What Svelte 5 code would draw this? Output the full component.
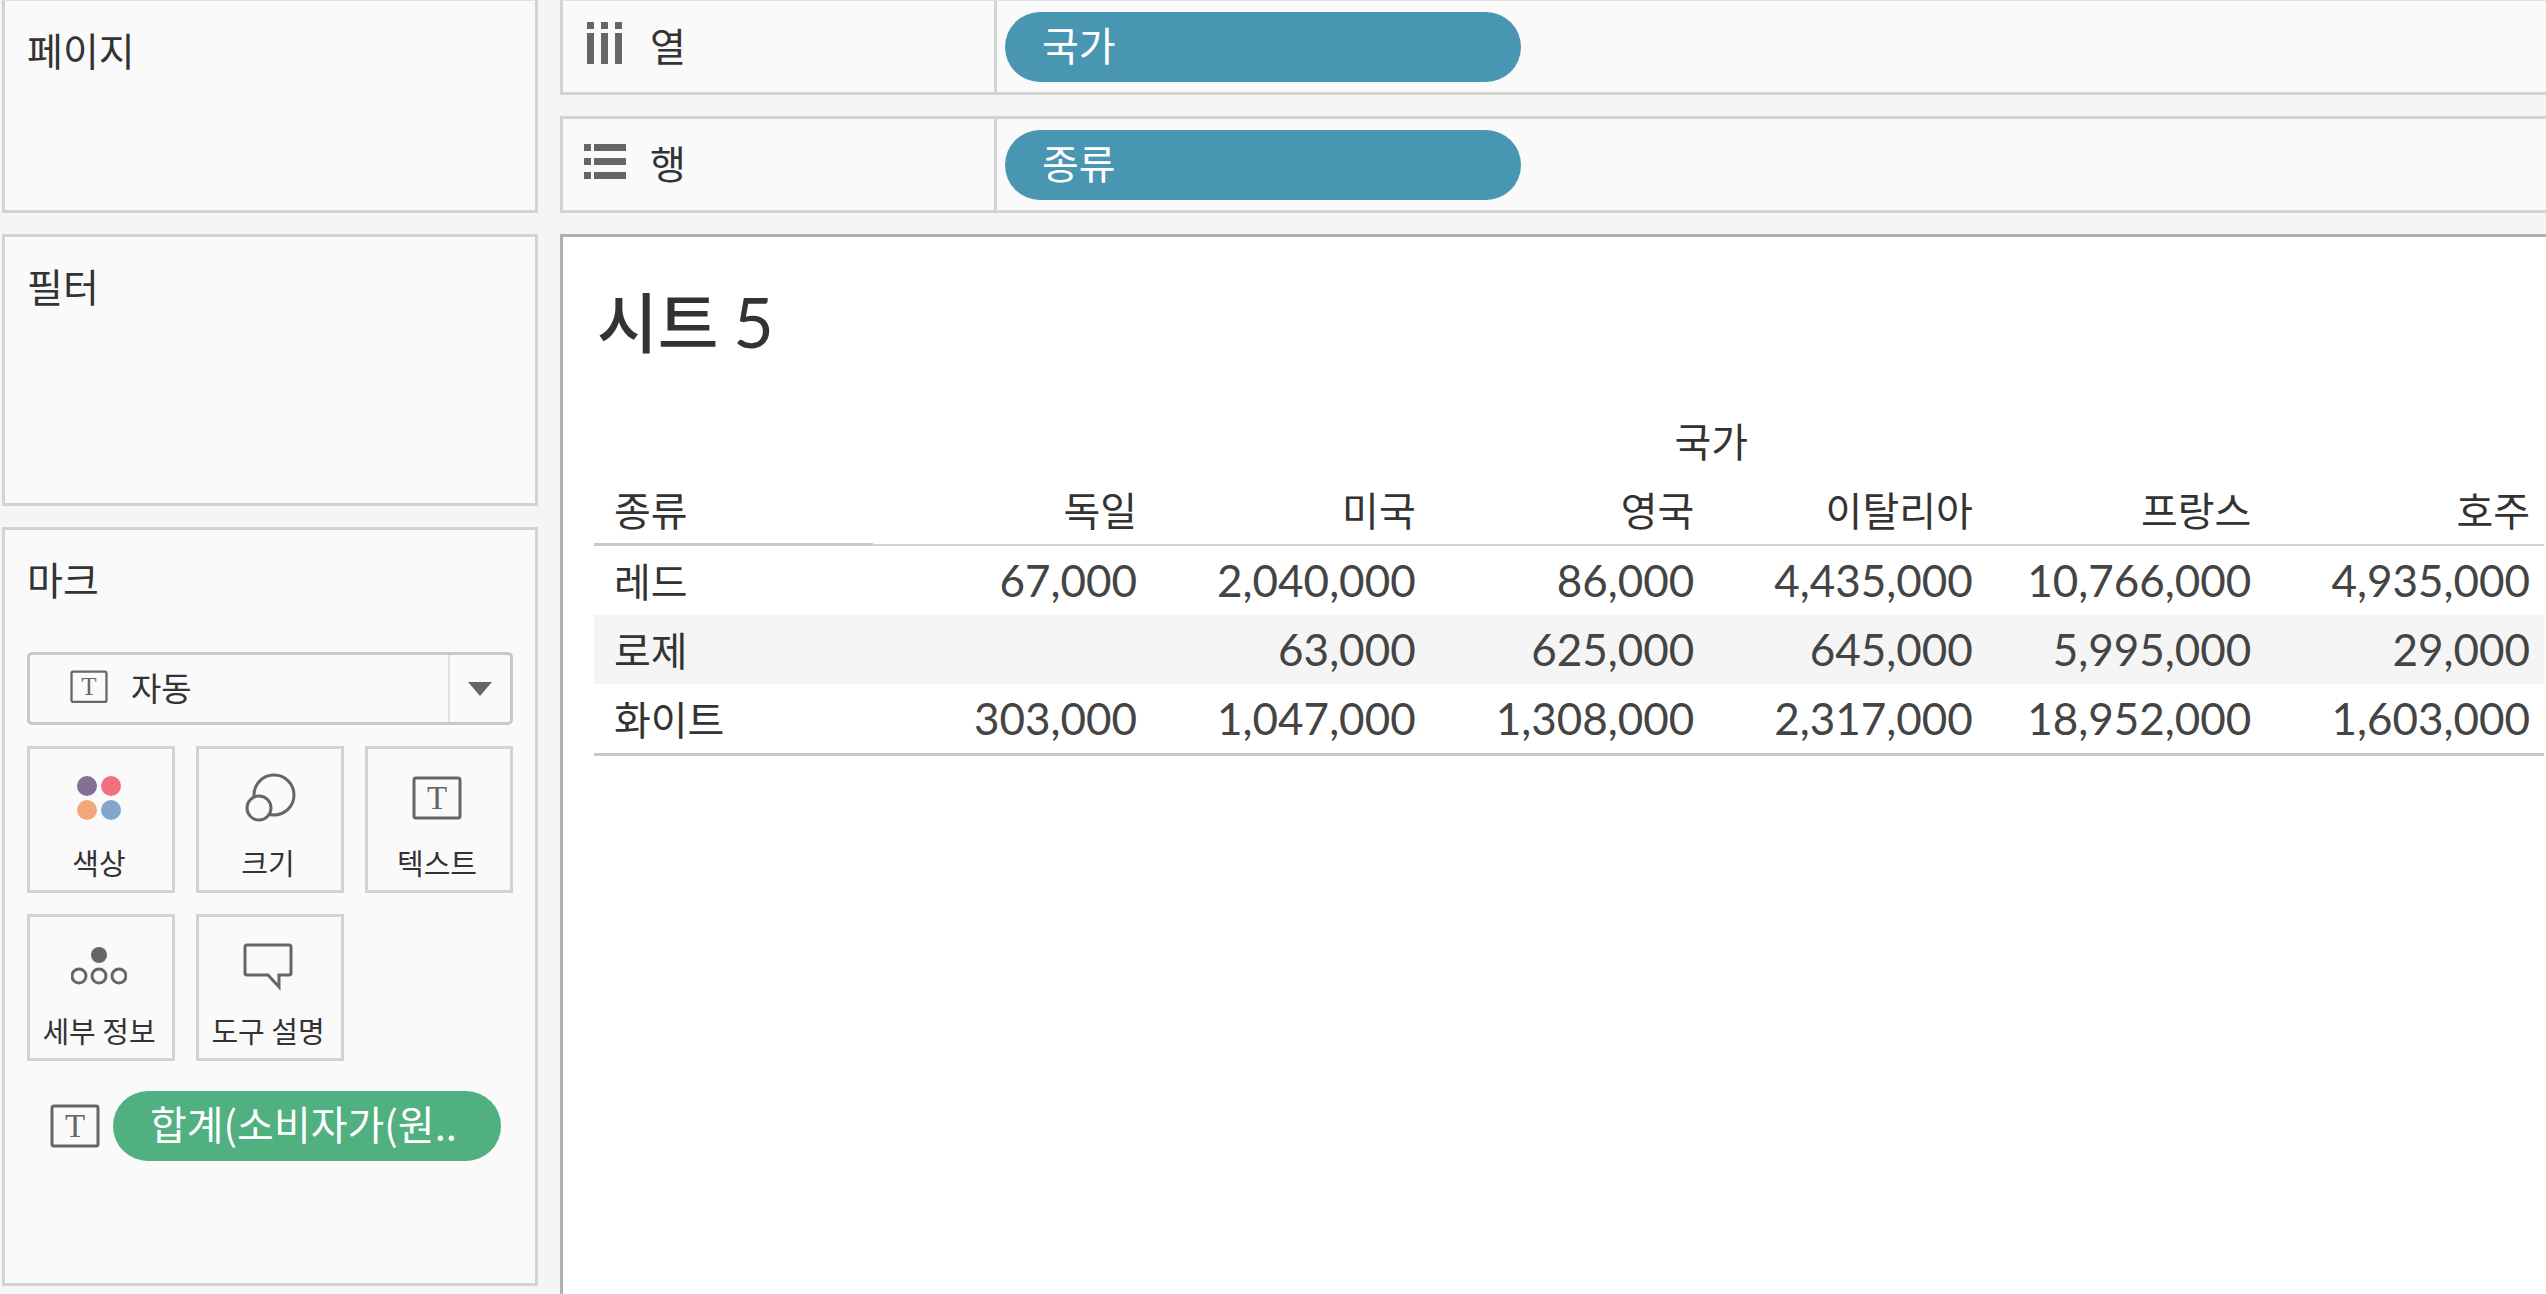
<script lang="ts">
  interface Row {
    kind: string;
    values: (number | null)[];
  }

  const countries = ['독일', '미국', '영국', '이탈리아', '프랑스', '호주'];

  const rows: Row[] = [
    { kind: '레드', values: [67000, 2040000, 86000, 4435000, 10766000, 4935000] },
    { kind: '로제', values: [null, 63000, 625000, 645000, 5995000, 29000] },
    { kind: '화이트', values: [303000, 1047000, 1308000, 2317000, 18952000, 1603000] }
  ];

  const markButtons = [
    { id: 'color', label: '색상' },
    { id: 'size', label: '크기' },
    { id: 'text', label: '텍스트' },
    { id: 'detail', label: '세부 정보' },
    { id: 'tooltip', label: '도구 설명' }
  ];

  const shelves = [
    { id: 'columns', label: '열', field: '국가' },
    { id: 'rows', label: '행', field: '종류' }
  ];

  let markType = $state('auto');

  function format(value: number | null) {
    return value === null ? '' : value.toLocaleString('en-US');
  }
</script>

{#snippet textIcon()}
  <svg class="text-icon" viewBox="0 0 50 44" aria-hidden="true">
    <rect x="2" y="2" width="46" height="40" rx="2" fill="none" stroke="currentColor" stroke-width="3" />
    <text x="25" y="33" text-anchor="middle">T</text>
  </svg>
{/snippet}

<div class="workspace">
  <aside class="sidebar">
    <section class="card pages">
      <h2>페이지</h2>
    </section>

    <section class="card filters">
      <h2>필터</h2>
    </section>

    <section class="card marks">
      <h2 id="marks-title">마크</h2>

      <div class="mark-type">
        <select bind:value={markType} aria-labelledby="marks-title">
          <option value="auto">자동</option>
        </select>
        <span class="mark-type-icon">{@render textIcon()}</span>
        <span class="mark-type-arrow">
          <svg viewBox="0 0 24 14" width="24" height="14" aria-hidden="true">
            <path d="M0 0h24L12 14z" fill="#666" />
          </svg>
        </span>
      </div>

      <div class="mark-buttons">
        {#each markButtons as button (button.id)}
          <button class="mark-button" type="button">
            {#if button.id === 'text'}
              <span class="mark-icon">{@render textIcon()}</span>
            {:else}
              <svg class="mark-icon" viewBox="0 0 56 56" fill="none" stroke="#666" stroke-width="3" aria-hidden="true">
                {#if button.id === 'color'}
                  <g stroke="none">
                    <circle cx="16" cy="16" r="10" fill="#866f97" />
                    <circle cx="40" cy="16" r="10" fill="#ef7180" />
                    <circle cx="16" cy="40" r="10" fill="#f3a77c" />
                    <circle cx="40" cy="40" r="10" fill="#82a5ca" />
                  </g>
                {:else if button.id === 'size'}
                  <circle cx="34" cy="25" r="20" />
                  <circle cx="19" cy="38" r="12" fill="#fafafa" />
                {:else if button.id === 'detail'}
                  <circle cx="28" cy="17" r="8" fill="#666" stroke="none" />
                  <circle cx="8" cy="38" r="7" />
                  <circle cx="28" cy="38" r="7" />
                  <circle cx="48" cy="38" r="7" />
                {:else}
                  <path d="M7 7h42a2 2 0 0 1 2 2v26a2 2 0 0 1-2 2H39v12L28 37H7a2 2 0 0 1-2-2V9a2 2 0 0 1 2-2z" />
                {/if}
              </svg>
            {/if}
            <span>{button.label}</span>
          </button>
        {/each}
      </div>

      <div class="mark-field">
        {@render textIcon()}
        <button class="pill measure" type="button">합계(소비자가(원..</button>
      </div>
    </section>
  </aside>

  <main class="content">
    {#each shelves as shelf (shelf.id)}
      <section class="shelf {shelf.id}">
        <div class="shelf-label">
          <svg viewBox="0 0 42 52" width="42" height="52" fill="#666" aria-hidden="true">
            {#if shelf.id === 'columns'}
              <path d="M3 1h7v7H3zM17 1h7v7h-7zM31 1h7v7h-7zM3 12h7v31H3zM17 12h7v31h-7zM31 12h7v31h-7z" />
            {:else}
              <path d="M0 5h7v7H0zM0 19h7v7H0zM0 33h7v7H0zM10 5h32v7H10zM10 19h32v7H10zM10 33h32v7H10z" />
            {/if}
          </svg>
          <h2>{shelf.label}</h2>
        </div>
        <button class="pill dimension" type="button">{shelf.field}</button>
      </section>
    {/each}

    <section class="view">
      <h1>시트 <span>5</span></h1>

      <table>
        <thead>
          <tr>
            <td></td>
            <th class="group" colspan={countries.length} scope="colgroup">국가</th>
          </tr>
          <tr class="names">
            <th scope="col">종류</th>
            {#each countries as country (country)}
              <th class="country" scope="col">{country}</th>
            {/each}
          </tr>
        </thead>
        <tbody>
          {#each rows as row (row.kind)}
            <tr>
              <th scope="row">{row.kind}</th>
              {#each row.values as value}
                <td>{format(value)}</td>
              {/each}
            </tr>
          {/each}
        </tbody>
      </table>
    </section>
  </main>
</div>

<style>
  :global(body) {
    background: #f5f5f5;
  }

  .workspace {
    display: grid;
    grid-template-columns: 536px minmax(0, 1fr);
    gap: 22px;
    min-height: 100vh;
    padding-left: 2px;
    box-sizing: border-box;
    font-family: 'Noto Sans CJK KR', sans-serif;
    font-size: 40px;
    line-height: 60px;
    color: #333;
  }

  h1,
  h2 {
    margin: 0;
    font-weight: 500;
  }

  h2 {
    font-size: 39px;
    font-weight: 400;
  }

  button,
  select {
    font-family: inherit;
    color: inherit;
  }

  .sidebar,
  .content {
    display: flex;
    flex-direction: column;
    gap: 21px;
  }

  .card {
    box-sizing: border-box;
    padding: 18px 22px;
    border: 3px solid #d3d3d3;
    background: #fafafa;
  }

  .pages {
    min-height: 213px;
    border-top-width: 1px;
    border-top-color: #e3e3e3;
  }

  .filters {
    min-height: 272px;
  }

  .marks {
    min-height: 759px;
  }

  /* Mark type drop-down */
  .mark-type {
    position: relative;
    margin-top: 44px;
  }

  .mark-type select {
    display: block;
    width: 100%;
    height: 73px;
    padding: 0 66px 4px 101px;
    border: 3px solid #c8c8c8;
    border-radius: 5px;
    background: #fafafa;
    font-size: 33px;
    appearance: none;
  }

  .mark-type-icon,
  .mark-type-arrow {
    position: absolute;
    top: 3px;
    bottom: 3px;
    display: flex;
    align-items: center;
    pointer-events: none;
  }

  .mark-type-icon {
    left: 43px;
    padding-bottom: 4px;
  }

  .mark-type-icon .text-icon {
    width: 38px;
  }

  .mark-type-arrow {
    right: 3px;
    width: 60px;
    justify-content: center;
    border-left: 2px solid #e0e0e0;
  }

  .text-icon {
    display: block;
    flex: none;
    width: 50px;
    color: #666;
    font-family: 'Liberation Serif', serif;
    font-size: 33px;
    fill: #666;
  }

  /* Encoding buttons */
  .mark-buttons {
    display: grid;
    grid-template-columns: repeat(3, 1fr);
    gap: 21px;
    margin-top: 21px;
  }

  .mark-button {
    display: flex;
    flex-direction: column;
    align-items: center;
    gap: 16px;
    height: 147px;
    padding: 21px 4px 0 0;
    border: 3px solid #d3d3d3;
    background: #fafafa;
    font-size: 29px;
    line-height: 40px;
    white-space: nowrap;
  }

  .mark-icon {
    display: flex;
    flex: none;
    align-items: center;
    justify-content: center;
    width: 56px;
    height: 56px;
  }

  .mark-field {
    display: flex;
    align-items: center;
    gap: 13px;
    margin-top: 30px;
    padding: 0 12px 0 23px;
  }

  .pill {
    height: 70px;
    padding: 0 37px 6px;
    border: 0;
    border-radius: 35px;
    color: #fff;
    font-size: 40px;
    line-height: 60px;
    text-align: left;
    white-space: nowrap;
  }

  .measure {
    flex: 1;
    background: #50b080;
  }

  .dimension {
    width: 516px;
    background: #4996b2;
  }

  /* Columns and rows shelves */
  .shelf {
    display: flex;
    align-items: center;
    border: 3px solid #d3d3d3;
    border-right: 0;
    background: #fafafa;
  }

  .shelf.columns {
    border-top-width: 1px;
    border-top-color: #e3e3e3;
  }

  .shelf-label {
    display: flex;
    align-items: center;
    gap: 24px;
    box-sizing: border-box;
    width: 434px;
    height: 91px;
    margin-right: 8px;
    padding-left: 21px;
    border-right: 3px solid #d3d3d3;
  }

  .shelf-label h2 {
    padding-bottom: 6px;
  }

  .view {
    flex: 1;
    padding: 32px 2px 0 31px;
    border: 3px solid #b0b0b0;
    border-width: 3px 0 0 3px;
    background: #fff;
  }

  h1 {
    padding-left: 3px;
    font-size: 66px;
    line-height: 100px;
  }

  h1 span {
    font-family: Lato, sans-serif;
    font-size: 70px;
    font-weight: 400;
  }

  table {
    width: 100%;
    margin-top: 35px;
    border-collapse: separate;
    border-spacing: 0;
    border-bottom: 3px solid #c8c8c8;
    table-layout: fixed;
  }

  th,
  td {
    box-sizing: border-box;
    height: 70px;
    padding: 0 14px 2px 20px;
    font-weight: 400;
    text-align: left;
  }

  td {
    color: #444;
    font-family: Lato, sans-serif;
    font-size: 44px;
    text-align: right;
  }

  tbody th,
  tbody td {
    height: 69px;
  }

  .group {
    text-align: center;
  }

  .country {
    text-align: right;
  }

  .names th {
    border-bottom: 3px solid #c8c8c8;
  }

  .names .country {
    border-bottom-width: 2px;
    border-bottom-color: #d3d3d3;
  }

  tbody tr:nth-child(even) {
    background: #f5f5f5;
  }
</style>
